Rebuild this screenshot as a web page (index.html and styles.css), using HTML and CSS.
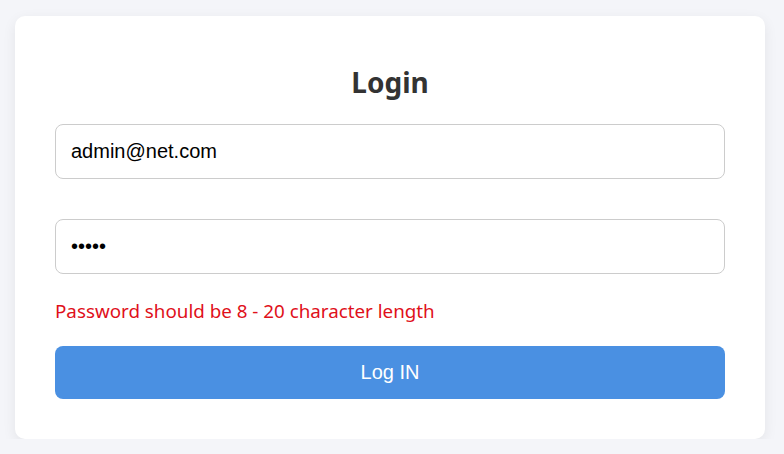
FILE: index.html
```html
<!DOCTYPE html>
<html lang="en">
<head>
<meta charset="utf-8">
<title>Login</title>
<link rel="stylesheet" href="styles.css">
</head>
<body>
<div class="card">
  <h2 class="title">Login</h2>
  <form class="form">
    <input class="field" type="email" value="admin@net.com">
    <input class="field field-pass" type="password" value="12345">
    <p class="error">Password should be 8 - 20 character length</p>
    <button class="btn" type="button">Log IN</button>
  </form>
</div>
</body>
</html>
```

FILE: styles.css
```css
html, body {
  margin: 0;
  padding: 0;
}
body {
  background: #f4f5f9;
  padding: 16px 20px 0 15px;
  font-family: "Noto Sans", "Open Sans", sans-serif;
}
.card {
  width: 750px;
  box-sizing: border-box;
  background: #fff;
  border-radius: 10px;
  box-shadow: 0 4px 14px rgba(0, 0, 0, 0.07);
  padding: 40px 40px 40px 40px;
}
.title {
  margin: 0 0 16px;
  height: 52px;
  line-height: 52px;
  text-align: center;
  font-size: 28px;
  font-weight: 700;
  color: #333;
}
.form {
  display: flex;
  flex-direction: column;
  margin: 0;
}
.field {
  display: block;
  box-sizing: border-box;
  width: 100%;
  height: 55px;
  margin: 0;
  padding: 0 15px;
  border: 1px solid #ccc;
  border-radius: 8px;
  font-family: "Liberation Sans", Arial, sans-serif;
  font-size: 20px;
  color: #000;
  outline: none;
}
.field-pass {
  margin-top: 40px;
}
.error {
  margin: 25px 0 23px;
  line-height: 24px;
  font-size: 18.8px;
  color: #e0101a;
}
.btn {
  display: block;
  width: 100%;
  height: 53px;
  border: 0;
  border-radius: 8px;
  background: #4a90e2;
  color: #fff;
  font-family: "Liberation Sans", Arial, sans-serif;
  font-size: 20px;
}
```
